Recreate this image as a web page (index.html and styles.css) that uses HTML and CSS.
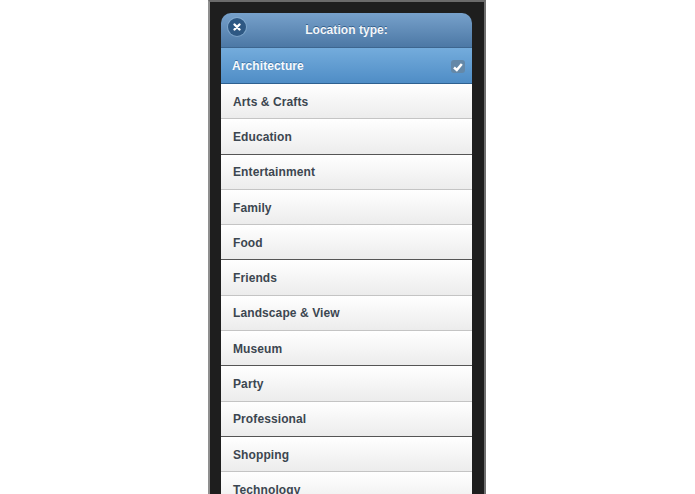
FILE: index.html
```html
<!DOCTYPE html>
<html lang="en">
<head>
<meta charset="utf-8">
<title>Location type</title>
<link rel="stylesheet" href="styles.css">
</head>
<body>
<div class="device">
  <div class="panel">
    <header class="head">
      <span class="close">
        <svg viewBox="0 0 10 10" width="10" height="10"><path d="M2.500 2.500l5 5M7.500 2.500l-5 5" stroke="#fff" stroke-width="2.400" stroke-linecap="round"/></svg>
      </span>
      <h1 class="title">Location type:</h1>
    </header>
    <ul class="list">
      <li class="row selected">Architecture
        <span class="check">
          <svg viewBox="0 0 12 12" width="12" height="12"><path d="M2 6.500l2.800 2.500 5-6" fill="none" stroke="#fff" stroke-width="2.500"/></svg>
        </span>
      </li>
      <li class="row">Arts &amp; Crafts</li>
      <li class="row dark">Education</li>
      <li class="row">Entertainment</li>
      <li class="row">Family</li>
      <li class="row dark">Food</li>
      <li class="row">Friends</li>
      <li class="row">Landscape &amp; View</li>
      <li class="row dark">Museum</li>
      <li class="row">Party</li>
      <li class="row dark">Professional</li>
      <li class="row">Shopping</li>
      <li class="row">Technology</li>
    </ul>
  </div>
</div>
</body>
</html>
```

FILE: styles.css
```css
html, body {
  margin: 0;
  padding: 0;
  height: 494px;
  overflow: hidden;
  background: #fff;
  font-family: "Liberation Sans", Arial, sans-serif;
}
.device {
  box-sizing: border-box;
  width: 278px;
  height: 494px;
  margin-left: 208px;
  padding: 11px 11px 0 11px;
  background: #1e1e1e;
  border-left: 2px solid #8f8f8f;
  border-right: 2px solid #6f6f6f;
  border-top: 2px solid #6a6a6a;
  overflow: hidden;
}
.panel {
  width: 251px;
}
.head {
  position: relative;
  height: 35px;
  box-sizing: border-box;
  background: linear-gradient(#77a1cb, #4c78a5);
  border-radius: 10px 10px 0 0;
  border-bottom: 1px solid #3d668f;
  display: flex;
  align-items: center;
  justify-content: center;
}
.title {
  margin: 0;
  font-size: 12px;
  font-weight: bold;
  letter-spacing: 0.05px;
  color: #f4f7fa;
  text-shadow: 0 -1px 0 #35608c;
}
.close {
  position: absolute;
  left: 7px;
  top: 5px;
  width: 18px;
  height: 18px;
  border-radius: 50%;
  background: #2e5883;
  box-shadow: 0 0 0 1px rgba(160,195,225,.45);
  display: flex;
  align-items: center;
  justify-content: center;
}
.list {
  list-style: none;
  margin: 0;
  padding: 0;
}
.row {
  position: relative;
  box-sizing: border-box;
  height: 35.300px;
  padding: 1px 0 0 12px;
  display: flex;
  align-items: center;
  font-size: 12px;
  font-weight: bold;
  letter-spacing: 0.1px;
  color: #3c4650;
  background: linear-gradient(#fff, #ececec);
  border-bottom: 1px solid #c4c4c4;
}
.row.dark {
  border-bottom-color: #555;
}
.row.selected {
  height: 36px;
  padding: 0 0 0 11px;
  color: #f7fafd;
  text-shadow: 0 -1px 0 #3f76a8;
  background: linear-gradient(#74acdc, #4f8dc6);
  border-bottom: 1px solid #2f6190;
}
.check {
  position: absolute;
  right: 7px;
  top: 12px;
  width: 14px;
  height: 13px;
  border-radius: 3px;
  background: #6488a8;
  display: flex;
  align-items: center;
  justify-content: center;
}
```
